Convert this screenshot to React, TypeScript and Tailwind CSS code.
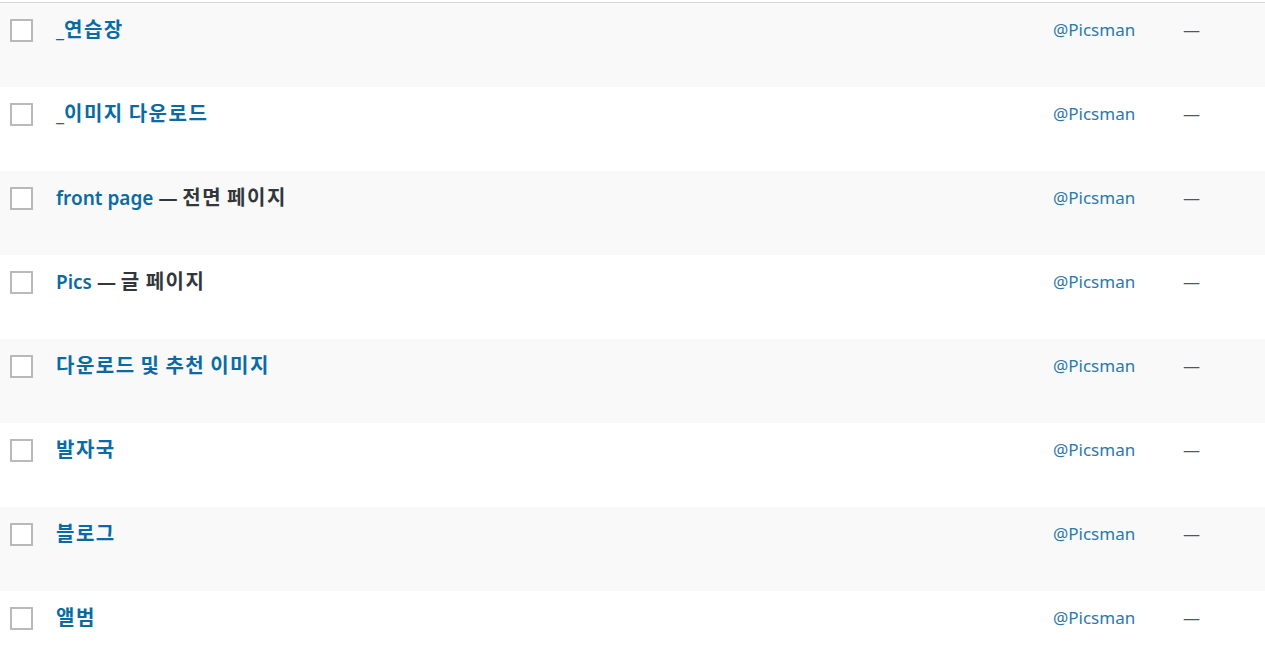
const ROWS: { title: string; suffix?: string }[] = [
  { title: "_연습장" },
  { title: "_이미지 다운로드" },
  { title: "front page", suffix: "전면 페이지" },
  { title: "Pics", suffix: "글 페이지" },
  { title: "다운로드 및 추천 이미지" },
  { title: "발자국" },
  { title: "블로그" },
  { title: "앨범" },
];

const FONT = "font-['Noto_Sans','Noto_Sans_CJK_KR',sans-serif]";

// Korean glyphs in the screenshot run wider than Noto's, so size them up a touch
const Ko = ({ text }: { text: string }) => {
  const parts = text.split(/([\uAC00-\uD7A3]+)/);
  return (
    <>
      {parts.map((p, i) =>
        /[\uAC00-\uD7A3]/.test(p) ? (
          <span key={i} className="text-[20px] tracking-[1.5px] font-bold">{p}</span>
        ) : (
          <span key={i}>{p}</span>
        )
      )}
    </>
  );
};

export default function App() {
  return (
    <div className={`w-[1265px] h-[658px] overflow-hidden bg-white ${FONT}`}>
      <div className="h-[2px] bg-white" />
      <div className="h-[1px] bg-[#d6d6d6]" />
      {ROWS.map((row, i) => (
        <div
          key={row.title}
          className={`flex items-start h-[84px] ${i % 2 === 0 ? "bg-[#f9f9f9]" : "bg-white"}`}
        >
          <div className="w-[56px] pl-[10px] pt-[16px]">
            <div className="w-[23px] h-[23px] border-2 border-[#b9b9b9] bg-white" />
          </div>
          <div className="w-[997px] pt-[13px] text-[19px] font-semibold leading-[28px]">
            <span className="text-[#0a6ba3]"><Ko text={row.title} /></span>
            {row.suffix && (
              <span className="text-[#32373c]"> — <Ko text={row.suffix} /></span>
            )}
          </div>
          <div className="w-[130px] pt-[14px] text-[17px] leading-[26px] text-[#2a79ad]">@Picsman</div>
          <div className="pt-[14px] text-[17px] leading-[26px] text-[#50575e]">—</div>
        </div>
      ))}
    </div>
  );
}
